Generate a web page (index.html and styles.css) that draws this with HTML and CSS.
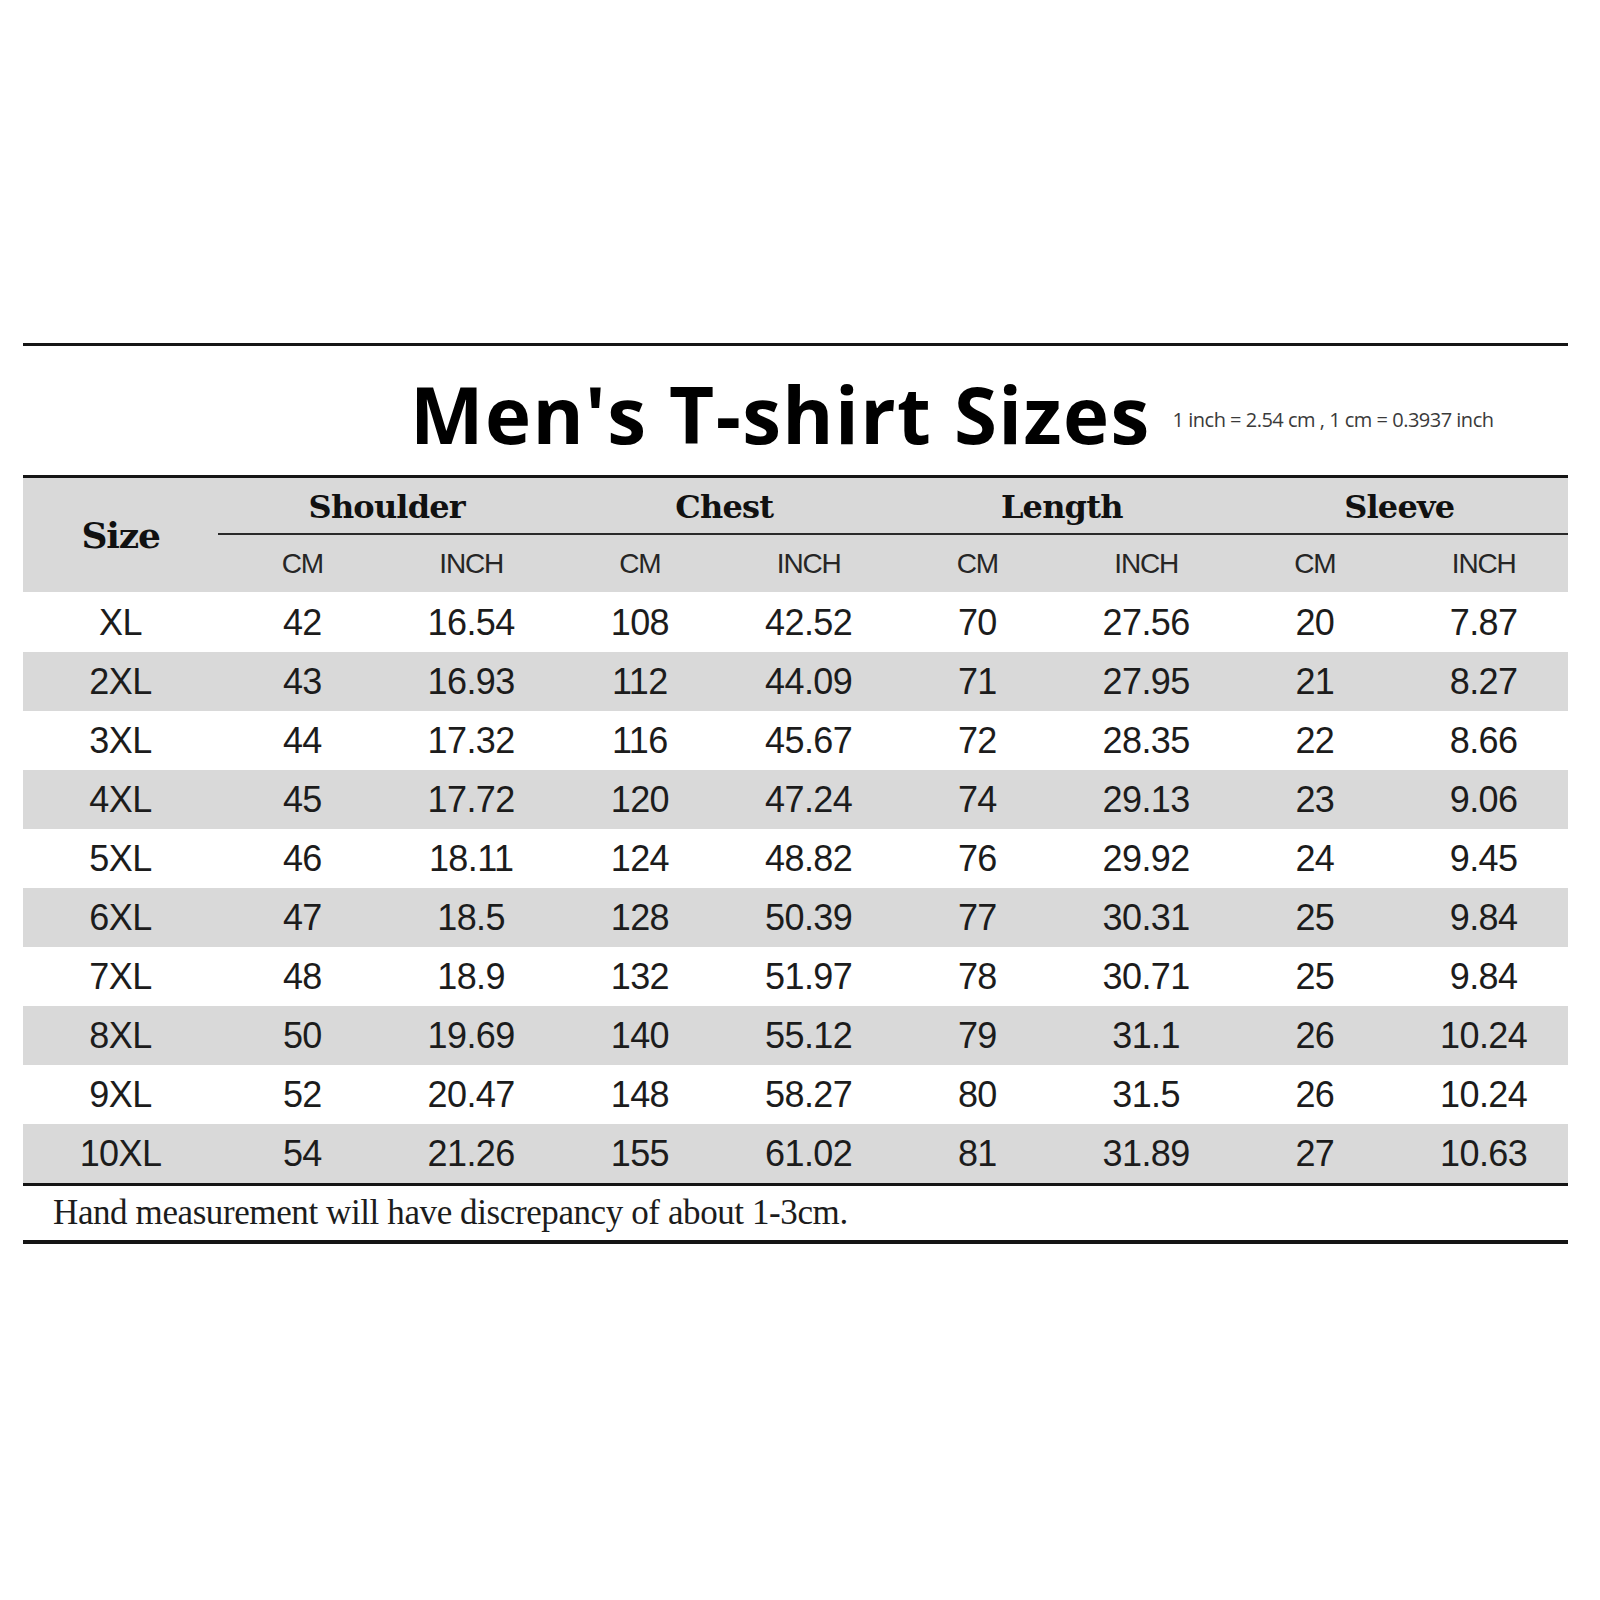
FILE: index.html
```html
<!DOCTYPE html>
<html lang="en">
<head>
<meta charset="utf-8">
<title>Men's T-shirt Sizes</title>
<link rel="stylesheet" href="styles.css">
</head>
<body>
<div class="chart">
  <div class="title-row">
    <h1 class="title">Men's T-shirt Sizes</h1>
    <span class="note">1 inch = 2.54 cm , 1 cm = 0.3937 inch</span>
  </div>
  <div class="table">
    <div class="head">
      <div class="size-h">Size</div>
      <div class="group">Shoulder</div>
      <div class="group">Chest</div>
      <div class="group">Length</div>
      <div class="group">Sleeve</div>
      <div class="unit">CM</div><div class="unit">INCH</div>
      <div class="unit">CM</div><div class="unit">INCH</div>
      <div class="unit">CM</div><div class="unit">INCH</div>
      <div class="unit">CM</div><div class="unit">INCH</div>
    </div>
    <div class="row"><div>XL</div><div>42</div><div>16.54</div><div>108</div><div>42.52</div><div>70</div><div>27.56</div><div>20</div><div>7.87</div></div>
    <div class="row"><div>2XL</div><div>43</div><div>16.93</div><div>112</div><div>44.09</div><div>71</div><div>27.95</div><div>21</div><div>8.27</div></div>
    <div class="row"><div>3XL</div><div>44</div><div>17.32</div><div>116</div><div>45.67</div><div>72</div><div>28.35</div><div>22</div><div>8.66</div></div>
    <div class="row"><div>4XL</div><div>45</div><div>17.72</div><div>120</div><div>47.24</div><div>74</div><div>29.13</div><div>23</div><div>9.06</div></div>
    <div class="row"><div>5XL</div><div>46</div><div>18.11</div><div>124</div><div>48.82</div><div>76</div><div>29.92</div><div>24</div><div>9.45</div></div>
    <div class="row"><div>6XL</div><div>47</div><div>18.5</div><div>128</div><div>50.39</div><div>77</div><div>30.31</div><div>25</div><div>9.84</div></div>
    <div class="row"><div>7XL</div><div>48</div><div>18.9</div><div>132</div><div>51.97</div><div>78</div><div>30.71</div><div>25</div><div>9.84</div></div>
    <div class="row"><div>8XL</div><div>50</div><div>19.69</div><div>140</div><div>55.12</div><div>79</div><div>31.1</div><div>26</div><div>10.24</div></div>
    <div class="row"><div>9XL</div><div>52</div><div>20.47</div><div>148</div><div>58.27</div><div>80</div><div>31.5</div><div>26</div><div>10.24</div></div>
    <div class="row"><div>10XL</div><div>54</div><div>21.26</div><div>155</div><div>61.02</div><div>81</div><div>31.89</div><div>27</div><div>10.63</div></div>
  </div>
  <p class="footnote">Hand measurement will have discrepancy of about 1-3cm.</p>
</div>
</body>
</html>
```

FILE: styles.css
```css
html, body {
  margin: 0;
  padding: 0;
  background: #ffffff;
}

.chart {
  width: 1545px;
  margin: 343px 0 0 23px;
  border-top: 3px solid #151515;
  color: #1a1a1a;
}

.title-row {
  box-sizing: border-box;
  height: 129px;
  padding: 29px 0 0 387px;
  display: flex;
  align-items: flex-start;
  gap: 22px;
}

.title {
  margin: 0;
  font-family: "Open Sans", "Noto Sans", sans-serif;
  font-weight: 700;
  font-size: 78px;
  line-height: 1;
  letter-spacing: 1.4px;
  color: #000;
}

.note {
  margin-top: 35px;
  font-family: "Open Sans", "Noto Sans", sans-serif;
  font-size: 20px;
  line-height: 1;
  letter-spacing: -0.5px;
  color: #3a3a3a;
}

.table {
  border-top: 3px solid #151515;
  border-bottom: 3px solid #151515;
}

.head {
  background: #d9d9d9;
  display: grid;
  grid-template-columns: 195px repeat(8, 1fr);
  grid-template-rows: 57px 57px;
  margin-bottom: 1px;
}

.size-h {
  grid-row: 1 / span 2;
  grid-column: 1;
  display: flex;
  align-items: center;
  justify-content: center;
  font-family: "DejaVu Serif", "Liberation Serif", serif;
  font-weight: 700;
  font-size: 36px;
  letter-spacing: -1.2px;
  color: #111;
}

.group {
  grid-column: span 2;
  box-sizing: border-box;
  border-bottom: 2px solid #2a2a2a;
  display: flex;
  align-items: center;
  justify-content: center;
  font-family: "DejaVu Serif", "Liberation Serif", serif;
  font-weight: 700;
  font-size: 32px;
  letter-spacing: -0.8px;
  color: #111;
  padding-top: 2px;
}

.unit {
  display: flex;
  align-items: center;
  justify-content: center;
  font-family: "Liberation Sans", Arial, sans-serif;
  font-size: 28px;
  letter-spacing: -1.2px;
  color: #262626;
}

.row {
  display: grid;
  grid-template-columns: 195px repeat(8, 1fr);
  height: 59px;
  align-items: center;
  justify-items: center;
  font-family: "Liberation Sans", Arial, sans-serif;
  font-size: 36px;
  letter-spacing: -0.6px;
  color: #1c1c1c;
}

.row:nth-child(odd) {
  background: #d9d9d9;
}

.footnote {
  margin: 0;
  box-sizing: border-box;
  height: 58px;
  border-bottom: 4px solid #151515;
  padding-left: 30px;
  display: flex;
  align-items: center;
  font-family: "Liberation Serif", "DejaVu Serif", serif;
  font-size: 35px;
  letter-spacing: -0.4px;
  color: #1c1c1c;
}
```
